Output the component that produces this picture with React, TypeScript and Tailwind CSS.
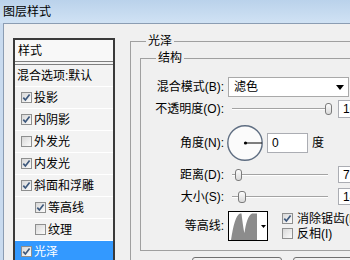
import React from "react";

function Check({ checked }: { checked: boolean }) {
  return (
    <span className="w-[11px] h-[11px] border border-[#8e8f8f] bg-linear-to-br from-[#d8d8d8] to-[#fbfbfb] flex items-center justify-center shrink-0">
      {checked && (
        <svg width="9" height="9" viewBox="0 0 9 9">
          <path d="M1.3 4.6 L3.4 7 L7.6 1.6" stroke="#3d587c" strokeWidth="1.7" fill="none" />
        </svg>
      )}
    </span>
  );
}

const rows = [
  { label: "投影", c: true, indent: false, sel: false },
  { label: "内阴影", c: true, indent: false, sel: false },
  { label: "外发光", c: false, indent: false, sel: false },
  { label: "内发光", c: true, indent: false, sel: false },
  { label: "斜面和浮雕", c: true, indent: false, sel: false },
  { label: "等高线", c: true, indent: true, sel: false },
  { label: "纹理", c: false, indent: true, sel: false },
  { label: "光泽", c: true, indent: false, sel: true },
];

function List() {
  return (
    <div className="ml-[9px] mt-[14px] w-[102px] h-[230px] border-2 border-b-0 border-[#3a3a3a] bg-[#f3f3f3] shrink-0 flex flex-col">
      <div className="h-[21px] flex items-center pl-[3px] bg-[#f8f8f8]">样式</div>
      <div className="h-[4px] border-y border-[#7f7f7f] bg-[#f3f3f3]" />
      <div className="h-[22px] border-b border-white flex items-center pl-[2px]">混合选项:默认</div>
      {rows.map((r) => (
        <div
          key={r.label}
          className={
            "h-[22px] border-b flex items-center gap-[2px] " +
            (r.indent ? "pl-[20px] " : "pl-[6px] ") +
            (r.sel ? "bg-[#3399ff] text-white border-[#3399ff]" : "border-white")
          }
        >
          <Check checked={r.c} />
          <span>{r.label}</span>
        </div>
      ))}
    </div>
  );
}

function Label({ children }: { children: React.ReactNode }) {
  return <div className="w-[83px] text-right shrink-0 whitespace-nowrap">{children}</div>;
}

function Thumb({ pos }: { pos: string }) {
  return (
    <div
      className={
        "absolute top-1/2 -translate-y-1/2 w-[7px] h-[12px] rounded-[3px] border border-[#7b7b7b] bg-linear-to-b from-[#fdfdfd] to-[#d9d9d9] " +
        pos
      }
    />
  );
}

function Track() {
  return (
    <div className="absolute left-[4px] w-[96px] top-1/2 -translate-y-1/2 h-[2px] border-t border-[#a3a3a3] bg-white" />
  );
}

function Input({ value, cls }: { value: string; cls: string }) {
  return (
    <div className={"border border-[#abadb3] bg-white flex items-center pl-[4px] shrink-0 " + cls}>
      {value}
    </div>
  );
}

function Right() {
  return (
    <fieldset className="ml-[15px] mt-[9px] w-[260px] h-[260px] border border-[#a0a0a0] shrink-0 min-w-0">
      <legend className="ml-[15px] px-[2px] leading-[16px]">光泽</legend>
      <fieldset className="ml-[9px] mt-[1px] w-[240px] h-[201px] border border-[#a0a0a0] min-w-0">
        <legend className="ml-[15px] px-[2px] leading-[16px]">结构</legend>
        <div className="flex flex-col">
          <div className="mt-[11px] h-[20px] flex items-center">
            <Label>混合模式(B):</Label>
            <div className="ml-[4px] w-[121px] h-[20px] border border-[#a9a9a9] bg-white flex items-center pl-[5px] relative shrink-0">
              滤色
              <svg className="absolute right-[4px] top-[7px]" width="8" height="5" viewBox="0 0 8 5">
                <path d="M0 0 H8 L4 5 Z" fill="#000" />
              </svg>
            </div>
          </div>
          <div className="mt-[3px] h-[18px] flex items-center">
            <Label>不透明度(O):</Label>
            <div className="ml-[4px] w-[106px] h-full relative shrink-0">
              <Track />
              <Thumb pos="left-[97px]" />
            </div>
            <Input value="100" cls="ml-[4px] w-[40px] h-[18px]" />
          </div>
          <div className="mt-[7px] h-[36px] flex items-center">
            <Label>角度(N):</Label>
            <svg className="ml-[3px] shrink-0" width="36" height="36" viewBox="0 0 36 36">
              <circle cx="18" cy="18" r="17.2" fill="#fbfbfb" stroke="#5f6e82" strokeWidth="1.4" />
              <circle cx="18.5" cy="18" r="1.6" fill="#000" />
              <line x1="18.5" y1="18" x2="35" y2="18" stroke="#000" strokeWidth="1" />
            </svg>
            <Input value="0" cls="ml-[4px] w-[41px] h-[20px]" />
            <span className="ml-[4px]">度</span>
          </div>
          <div className="mt-[5px] h-[17px] flex items-center">
            <Label>距离(D):</Label>
            <div className="ml-[4px] w-[106px] h-full relative shrink-0">
              <Track />
              <Thumb pos="left-[7px]" />
            </div>
            <Input value="7" cls="ml-[4px] w-[40px] h-[17px]" />
          </div>
          <div className="mt-[5px] h-[17px] flex items-center">
            <Label>大小(S):</Label>
            <div className="ml-[4px] w-[106px] h-full relative shrink-0">
              <Track />
              <Thumb pos="left-[10px] w-[8px]" />
            </div>
            <Input value="14" cls="ml-[4px] w-[40px] h-[17px]" />
          </div>
          <div className="mt-[6px] h-[30px] flex items-center">
            <Label>等高线:</Label>
            <div className="ml-[4px] w-[40px] h-[30px] border border-black bg-white relative shrink-0">
              <svg className="absolute left-0 top-0" width="38" height="28" viewBox="0 0 38 28">
                <path
                  d="M2 28 C4 14 7 3 11 1.5 L12.5 1.5 C13.5 10 14.5 18 15.5 21 C16.8 12 19 3 23 1.5 L28 1.5 L28 28 Z"
                  fill="#8c8c8c"
                />
                <path d="M32 13 H37 L34.5 16 Z" fill="#000" />
              </svg>
            </div>
            <div className="ml-[14px] flex flex-col">
              <div className="h-[15px] flex items-center gap-[4px] whitespace-nowrap">
                <Check checked={true} />
                <span>消除锯齿(L)</span>
              </div>
              <div className="h-[15px] flex items-center gap-[4px] whitespace-nowrap">
                <Check checked={false} />
                <span>反相(I)</span>
              </div>
            </div>
          </div>
        </div>
      </fieldset>
      <div className="mt-[6px] flex">
        <div className="ml-[61px] w-[90px] h-[22px] border border-[#707070] rounded-[3px] bg-linear-to-b from-[#f2f2f2] to-[#e5e5e5] flex items-center justify-center shrink-0">
          设置为默认值
        </div>
        <div className="ml-[11px] w-[90px] h-[22px] border border-[#707070] rounded-[3px] bg-linear-to-b from-[#f2f2f2] to-[#e5e5e5] flex items-center justify-center shrink-0">
          复位为默认值
        </div>
      </div>
    </fieldset>
  );
}

export default function App() {
  return (
    <div className="w-[350px] h-[260px] overflow-hidden bg-[#c9dbef] text-black text-[12px] leading-[16px] [font-family:'Liberation_Sans','Noto_Sans_CJK_SC',sans-serif]">
      <div className="h-[23px] flex items-center pl-[3px] bg-linear-to-b from-[#bad2eb] to-[#d0e2f4]">图层样式</div>
      <div className="ml-[3px] h-[237px] border-l border-t border-[#8b9db3] bg-[#f0f0f0] flex items-start">
        <List />
        <Right />
      </div>
    </div>
  );
}
